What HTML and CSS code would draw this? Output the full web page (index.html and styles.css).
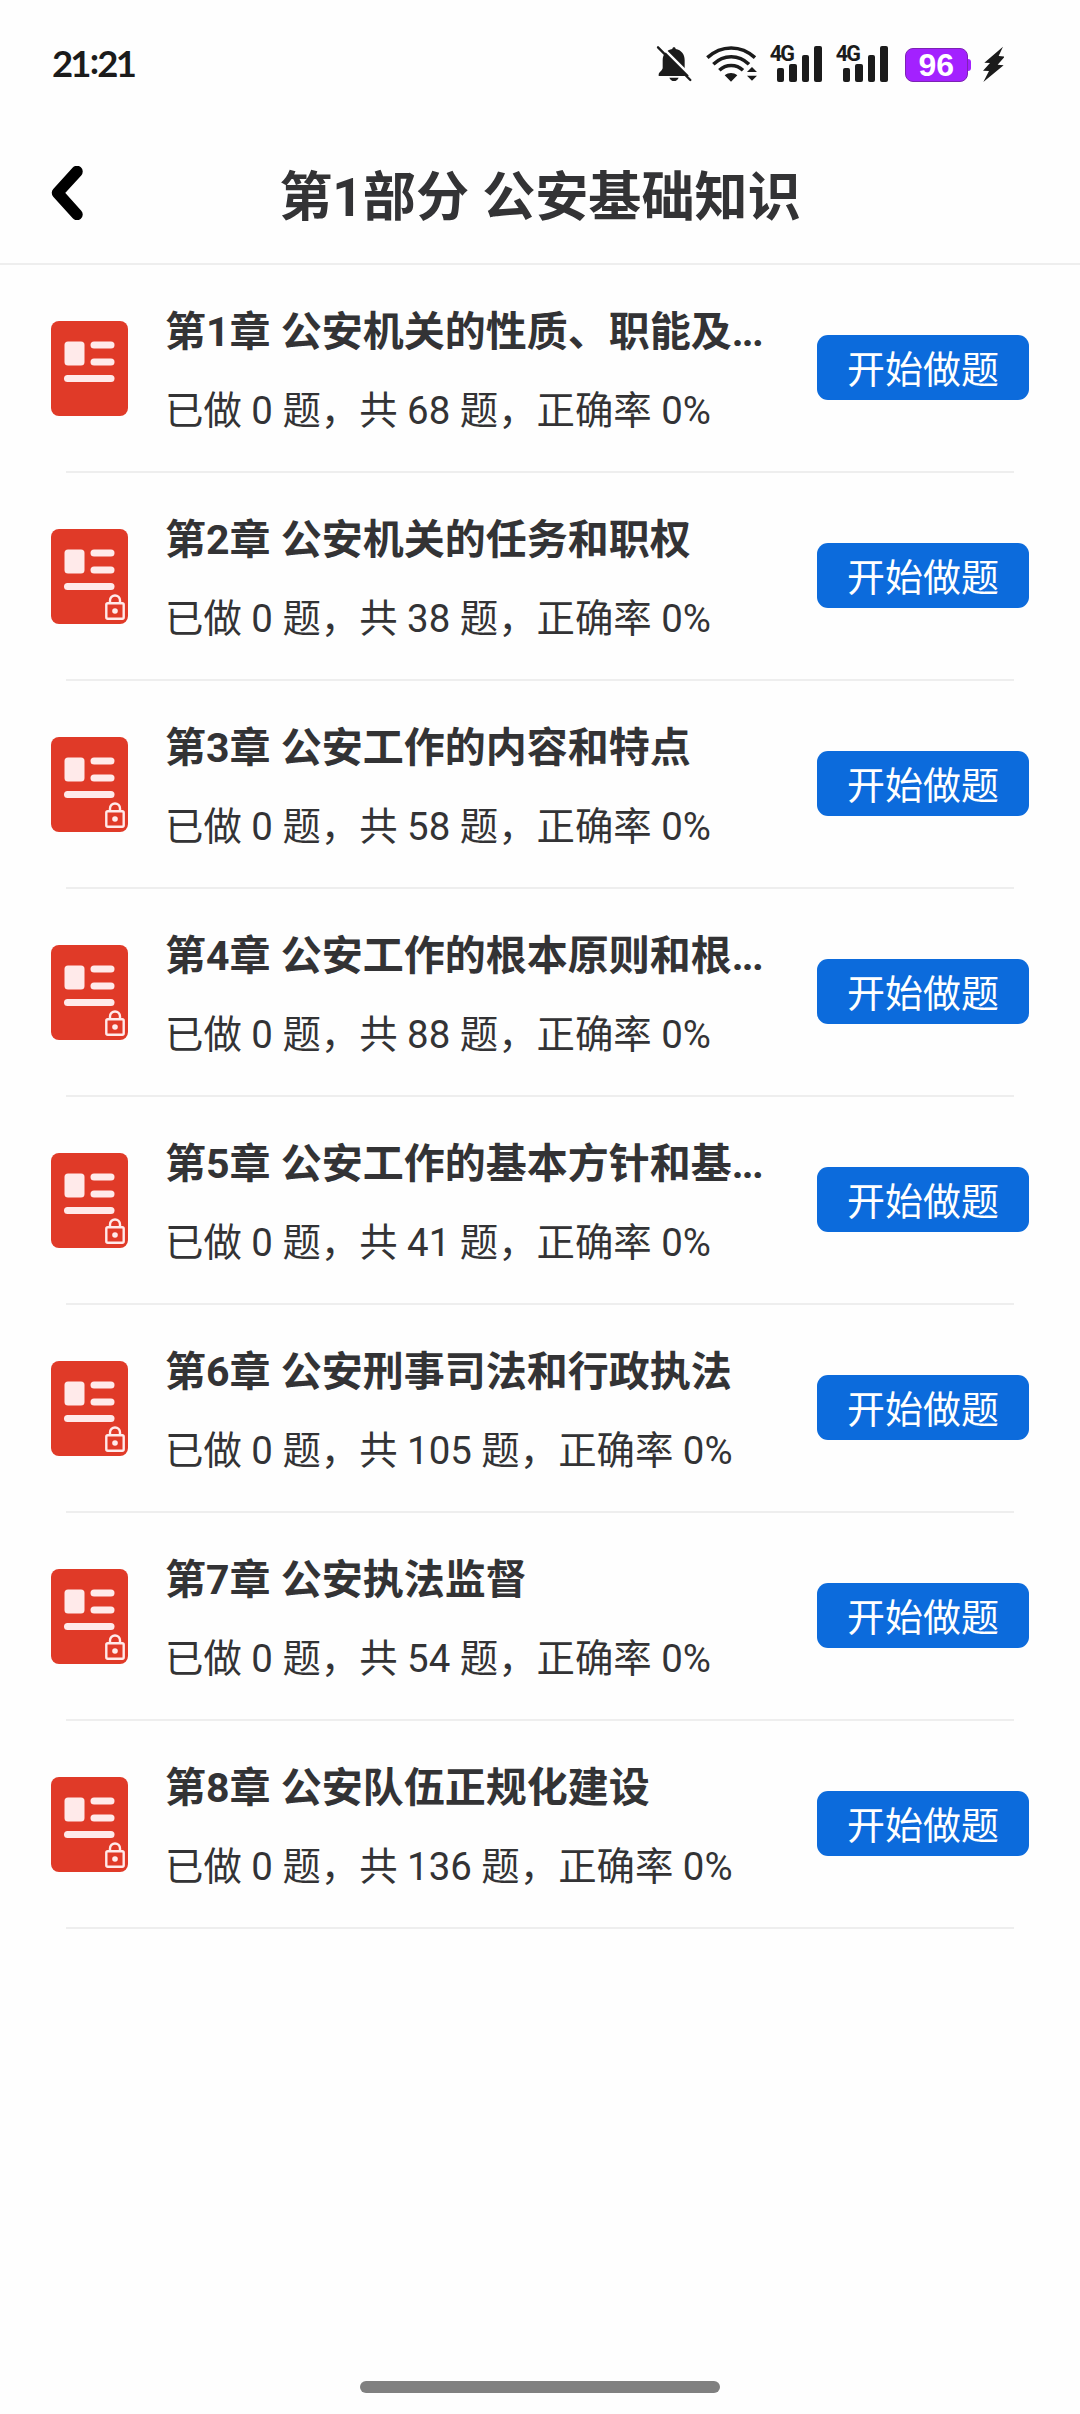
FILE: index.html
```html
<!DOCTYPE html>
<html lang="zh-CN">
<head>
<meta charset="utf-8">
<title>第1部分 公安基础知识</title>
<link rel="stylesheet" href="styles.css">
</head>
<body>
<svg class="defs" width="0" height="0" aria-hidden="true">
  <symbol id="book" viewBox="0 0 77 95">
    <rect width="77" height="95" rx="8" fill="#e03a28"/>
    <rect x="13.5" y="20.5" width="20" height="24" rx="3.5" fill="#ffeaea"/>
    <rect x="39.5" y="20.5" width="24" height="7" rx="3.5" fill="#ffeaea"/>
    <rect x="39.5" y="37.5" width="24" height="7" rx="3.5" fill="#ffeaea"/>
    <rect x="13" y="54" width="50.5" height="7" rx="3.5" fill="#ffeaea"/>
  </symbol>
  <symbol id="lock" viewBox="0 0 20 26">
    <path d="M5 9V6.500a5 5 0 0 1 10 0V9" fill="none" stroke="#ffeaea" stroke-width="2.400"/>
    <rect x="1.300" y="9.300" width="17.400" height="15.400" rx="1.500" fill="none" stroke="#ffeaea" stroke-width="2.400"/>
    <circle cx="10" cy="17" r="2.800" fill="#ffeaea"/>
  </symbol>
</svg>
<div class="screen">
  <div class="status">
    <span class="clock">21<span class="colon">:</span>21</span>
    <div class="indicators">
      <svg class="bell" viewBox="48 44 108 112">
        <path d="M102 51c3 0 5 2 5 5 17 3 27 16 27 33v23c0 9 12 12 12 20v5H56v-5c0-7 12-12 12-20V89c0-17 12-30 29-33 0-3 2-5 5-5zM88 142h28c-3 7-8 10-14 10s-11-3-14-10z" fill="#1b1b1b"/>
        <path d="M58 42L160 144" stroke="#fff" stroke-width="7"/>
        <path d="M54 51L151 149" stroke="#1b1b1b" stroke-width="7" stroke-linecap="round"/>
      </svg>
      <svg class="wifi" viewBox="198 44 156 112">
        <g fill="none" stroke="#1b1b1b" stroke-width="10.500">
          <path d="M202 82C244 43 303 43 345 82"/>
          <path d="M220 102C251 72 296 72 327 102"/>
          <path d="M238 120C258 101 289 101 309 120"/>
        </g>
        <path d="M254 135c12-9 26-9 38 0l-19 19zM336 110l15 15h-30zM321 136h30l-15 15z" fill="#1b1b1b"/>
      </svg>
      <div class="signal">
        <span class="net">4G</span>
        <i class="b1"></i><i class="b2"></i><i class="b3"></i><i class="b4"></i>
      </div>
      <div class="signal">
        <span class="net">4G</span>
        <i class="b1"></i><i class="b2"></i><i class="b3"></i><i class="b4"></i>
      </div>
      <div class="battery"><span>96</span></div>
      <svg class="bolt" viewBox="1028 50 64 110"><path d="M1088 52L1032 100l17 1-21 23 18 1-17 33 61-50-18-2 21-24-18-2z" fill="#1b1b1b"/></svg>
    </div>
  </div>
  <header class="bar">
    <svg class="back" viewBox="0 0 32 54"><path d="M26 5.500L6.500 26.800 26 48.500" fill="none" stroke="#000" stroke-width="11.500" stroke-linecap="round" stroke-linejoin="round"/></svg>
    <h1>第1部分 公安基础知识</h1>
  </header>
  <main class="list">
    <section class="row">
      <div class="icon"><svg class="book"><use href="#book"/></svg></div>
      <div class="info"><h2>第1章 公安机关的性质、职能及<span class="dots">...</span></h2><p>已做 0 题，共 68 题，正确率 0%</p></div>
      <button class="start">开始做题</button>
    </section>
    <section class="row">
      <div class="icon"><svg class="book"><use href="#book"/></svg><svg class="lock"><use href="#lock"/></svg></div>
      <div class="info"><h2>第2章 公安机关的任务和职权</h2><p>已做 0 题，共 38 题，正确率 0%</p></div>
      <button class="start">开始做题</button>
    </section>
    <section class="row">
      <div class="icon"><svg class="book"><use href="#book"/></svg><svg class="lock"><use href="#lock"/></svg></div>
      <div class="info"><h2>第3章 公安工作的内容和特点</h2><p>已做 0 题，共 58 题，正确率 0%</p></div>
      <button class="start">开始做题</button>
    </section>
    <section class="row">
      <div class="icon"><svg class="book"><use href="#book"/></svg><svg class="lock"><use href="#lock"/></svg></div>
      <div class="info"><h2>第4章 公安工作的根本原则和根<span class="dots">...</span></h2><p>已做 0 题，共 88 题，正确率 0%</p></div>
      <button class="start">开始做题</button>
    </section>
    <section class="row">
      <div class="icon"><svg class="book"><use href="#book"/></svg><svg class="lock"><use href="#lock"/></svg></div>
      <div class="info"><h2>第5章 公安工作的基本方针和基<span class="dots">...</span></h2><p>已做 0 题，共 41 题，正确率 0%</p></div>
      <button class="start">开始做题</button>
    </section>
    <section class="row">
      <div class="icon"><svg class="book"><use href="#book"/></svg><svg class="lock"><use href="#lock"/></svg></div>
      <div class="info"><h2>第6章 公安刑事司法和行政执法</h2><p>已做 0 题，共 105 题，正确率 0%</p></div>
      <button class="start">开始做题</button>
    </section>
    <section class="row">
      <div class="icon"><svg class="book"><use href="#book"/></svg><svg class="lock"><use href="#lock"/></svg></div>
      <div class="info"><h2>第7章 公安执法监督</h2><p>已做 0 题，共 54 题，正确率 0%</p></div>
      <button class="start">开始做题</button>
    </section>
    <section class="row">
      <div class="icon"><svg class="book"><use href="#book"/></svg><svg class="lock"><use href="#lock"/></svg></div>
      <div class="info"><h2>第8章 公安队伍正规化建设</h2><p>已做 0 题，共 136 题，正确率 0%</p></div>
      <button class="start">开始做题</button>
    </section>
  </main>
  <div class="home"></div>
</div>
</body>
</html>
```
FILE: styles.css
```css
* { box-sizing: border-box; margin: 0; padding: 0; }
body {
  background: #fefefe;
  color: #333335;
  font-family: Roboto, "Noto Sans CJK SC", sans-serif;
}
.defs { position: absolute; }
.screen {
  width: 1080px;
  height: 2414px;
  display: flex;
  flex-direction: column;
  overflow: hidden;
}
.status {
  height: 128px;
  padding: 0 76px 0 52px;
  display: flex;
  align-items: center;
  justify-content: space-between;
}
.clock {
  font: 700 36.5px/44px Lato, sans-serif;
  letter-spacing: -2.8px;
  color: #1b1b1b;
  margin-bottom: 2px;
}
.colon {
  display: inline-block;
  margin: 0 1px;
  transform: translateY(-3px);
}
.indicators {
  display: flex;
  align-items: center;
  color: #1b1b1b;
}
.indicators svg { display: block; }
.bell { width: 36px; height: 37.3px; margin-right: 14px; }
.wifi { width: 52px; height: 37.3px; margin-right: 13px; }
.signal {
  position: relative;
  width: 52px;
  height: 37px;
  margin-right: 14px;
  padding-left: 6px;
  display: flex;
  align-items: flex-end;
  gap: 5px;
}
.signal i { width: 7.5px; background: #1b1b1b; border-radius: 2px; }
.signal .b1 { height: 14px; }
.signal .b2 { height: 18px; }
.signal .b3 { height: 27px; }
.signal .b4 { height: 36px; }
.net {
  position: absolute;
  left: -1px;
  top: 0;
  font: 700 21.5px/17px Roboto, sans-serif;
  letter-spacing: -1.8px;
}
.battery {
  position: relative;
  width: 63px;
  height: 34px;
  margin: 2px 15px 0 2px;
  border: 1px solid #7d22b4;
  border-radius: 8px;
  background: #a321ff;
  color: #fff;
  font: 700 32px/33px "Liberation Sans", sans-serif;
  text-align: center;
}
.battery::after {
  content: "";
  position: absolute;
  right: -4px;
  top: 10px;
  width: 3px;
  height: 12px;
  border-radius: 0 3px 3px 0;
  background: #a321ff;
}
.bolt { width: 21.3px; height: 36.7px; }
.bar {
  height: 137px;
  border-bottom: 2px solid #eeeeee;
  padding: 0 51px;
  display: grid;
  grid-template-columns: 32px 1fr 32px;
  align-items: center;
}
.back { width: 32px; height: 54px; margin-bottom: 6px; }
.bar h1 {
  padding-top: 4px;
  font-size: 53.1px;
  line-height: 80px;
  font-weight: 700;
  text-align: center;
  white-space: nowrap;
}
.row {
  position: relative;
  height: 208px;
  padding: 0 51px 2px;
  display: flex;
  align-items: center;
}
.row::after {
  content: "";
  position: absolute;
  left: 66px;
  right: 66px;
  bottom: 0;
  height: 2px;
  background: #eeeeee;
}
.icon { position: relative; width: 77px; height: 95px; }
.book { display: block; width: 77px; height: 95px; }
.lock { position: absolute; left: 54px; top: 65px; width: 20px; height: 26px; }
.info { width: 610px; margin-left: 37px; padding-top: 6px; }
.info h2 {
  font-size: 41px;
  line-height: 60px;
  font-weight: 700;
  white-space: nowrap;
}
.dots { letter-spacing: -1.8px; }
.info p {
  margin-top: 20px;
  font-size: 38.4px;
  line-height: 58px;
  white-space: nowrap;
}
.start {
  width: 212px;
  height: 65px;
  margin: 0 0 2px auto;
  padding-top: 5px;
  border: 0;
  border-radius: 11px;
  background: #0c6bdc;
  color: #fff;
  font: 400 38px/60px Roboto, "Noto Sans CJK SC", sans-serif;
}
.home {
  width: 360px;
  height: 12px;
  margin: auto auto 21px;
  border-radius: 6px;
  background: #808080;
}
```
